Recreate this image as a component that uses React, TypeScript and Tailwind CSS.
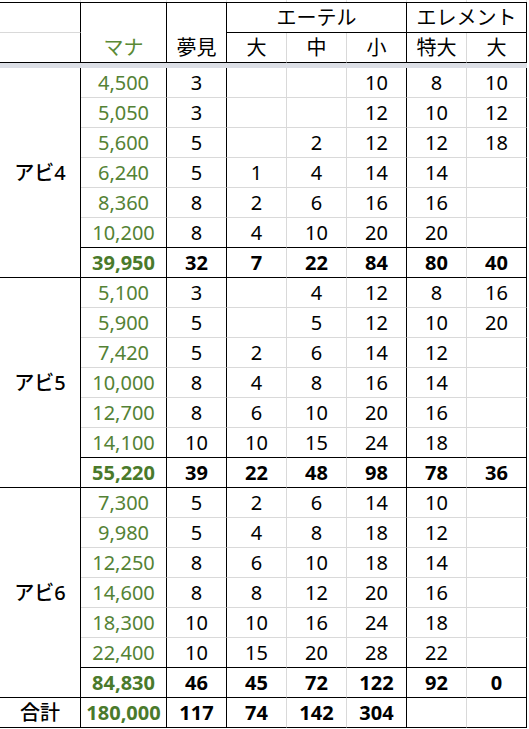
import React from "react";

type Row = (string | number | null)[];

const groups: { label: string; rows: Row[]; total: Row }[] = [
  {
    label: "アビ4",
    rows: [
      ["4,500", 3, null, null, 10, 8, 10],
      ["5,050", 3, null, null, 12, 10, 12],
      ["5,600", 5, null, 2, 12, 12, 18],
      ["6,240", 5, 1, 4, 14, 14, null],
      ["8,360", 8, 2, 6, 16, 16, null],
      ["10,200", 8, 4, 10, 20, 20, null],
    ],
    total: ["39,950", 32, 7, 22, 84, 80, 40],
  },
  {
    label: "アビ5",
    rows: [
      ["5,100", 3, null, 4, 12, 8, 16],
      ["5,900", 5, null, 5, 12, 10, 20],
      ["7,420", 5, 2, 6, 14, 12, null],
      ["10,000", 8, 4, 8, 16, 14, null],
      ["12,700", 8, 6, 10, 20, 16, null],
      ["14,100", 10, 10, 15, 24, 18, null],
    ],
    total: ["55,220", 39, 22, 48, 98, 78, 36],
  },
  {
    label: "アビ6",
    rows: [
      ["7,300", 5, 2, 6, 14, 10, null],
      ["9,980", 5, 4, 8, 18, 12, null],
      ["12,250", 8, 6, 10, 18, 14, null],
      ["14,600", 8, 8, 12, 20, 16, null],
      ["18,300", 10, 10, 16, 24, 18, null],
      ["22,400", 10, 15, 20, 28, 22, null],
    ],
    total: ["84,830", 46, 45, 72, 122, 92, 0],
  },
];

const grandTotal: Row = ["180,000", 117, 74, 142, 304, null, null];

// right border colour per data column (mana .. element大)
const rightBorder = [
  "border-r-black",
  "border-r-black",
  "border-r-[#d9d9d9]",
  "border-r-[#d9d9d9]",
  "border-r-black",
  "border-r-[#d9d9d9]",
  "border-r-black",
];

const base = "flex items-center justify-center border-r border-b leading-none";

function DataRow({ row, bottom, bold }: { row: Row; bottom: string; bold?: boolean }) {
  return (
    <>
      {row.map((v, i) => (
        <div
          key={i}
          className={`${base} ${rightBorder[i]} ${bottom} ${bold ? "font-bold" : ""} ${
            i === 0 ? (bold ? "text-[#4a7a2b]" : "text-[#548235]") : "text-black"
          }`}
        >
          {v}
        </div>
      ))}
    </>
  );
}

export default function App() {
  return (
    <div
      className="w-[529px] bg-white text-[20px]"
      style={{ fontFamily: "'Noto Sans', 'Noto Sans CJK JP', sans-serif" }}
    >
      {/* sliver of the row above */}
      <div className="grid h-[2px] grid-cols-[81px_86px_60px_60px_60px_60px_60px_60px]">
        {Array.from({ length: 8 }).map((_, i) => (
          <div key={i} className="border-r border-r-[#e3e3e3]" />
        ))}
      </div>

      <div className="grid w-[527px] grid-cols-[81px_86px_60px_60px_60px_60px_60px_60px] grid-rows-[30px_30px_5px] auto-rows-[30px] border-t border-t-black">
        {/* header row 1 */}
        <div className="border-r border-b border-r-black border-b-[#d9d9d9]" />
        <div className="row-span-2 flex flex-col justify-end border-r border-b border-black">
          <div className="flex h-[29px] items-center justify-center leading-none text-[#5b8a35]">マナ</div>
        </div>
        <div className="row-span-2 flex flex-col justify-end border-r border-b border-black">
          <div className="flex h-[29px] items-center justify-center leading-none">夢見</div>
        </div>
        <div className={`${base} col-span-3 border-black`}>エーテル</div>
        <div className={`${base} col-span-2 border-black`}>エレメント</div>

        {/* header row 2 */}
        <div className="border-r border-b border-black" />
        <div className={`${base} border-r-[#d9d9d9] border-b-black`}>大</div>
        <div className={`${base} border-r-[#d9d9d9] border-b-black`}>中</div>
        <div className={`${base} border-black`}>小</div>
        <div className={`${base} border-r-[#d9d9d9] border-b-black`}>特大</div>
        <div className={`${base} border-black`}>大</div>

        {/* frozen pane split */}
        <div className="col-span-8 bg-[#dcdfe6]" />

        {groups.map((g) => (
          <React.Fragment key={g.label}>
            <div className={`${base} row-span-7 border-black font-medium`}>{g.label}</div>
            {g.rows.map((r, i) => (
              <DataRow
                key={i}
                row={r}
                bottom={i === g.rows.length - 1 ? "border-b-black" : "border-b-[#d9d9d9]"}
              />
            ))}
            <DataRow row={g.total} bottom="border-b-black" bold />
          </React.Fragment>
        ))}

        <div className={`${base} border-black font-medium`}>合計</div>
        <DataRow row={grandTotal} bottom="border-b-black" bold />
      </div>
    </div>
  );
}
